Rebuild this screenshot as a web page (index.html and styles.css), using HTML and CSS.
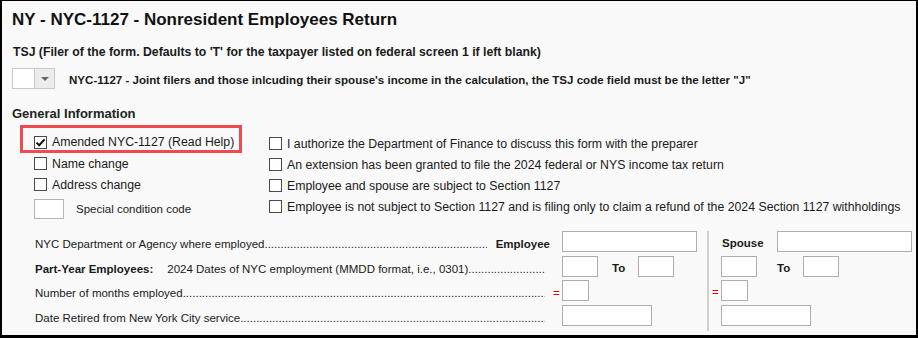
FILE: index.html
```html
<!DOCTYPE html>
<html lang="en">
<head>
<meta charset="utf-8">
<title>NY - NYC-1127 - Nonresident Employees Return</title>
<link rel="stylesheet" href="styles.css">
</head>
<body>
<div class="frame">
  <h1 class="title">NY - NYC-1127 - Nonresident Employees Return</h1>
  <div class="tsj-label">TSJ (Filer of the form. Defaults to 'T' for the taxpayer listed on federal screen 1 if left blank)</div>
  <div class="tsj-row">
    <div class="select">
      <span class="select-value"></span>
      <span class="select-btn"><svg width="8" height="4" viewBox="0 0 8 4"><path d="M0 0H8L4 4Z" fill="#666"/></svg></span>
    </div>
    <span class="note">NYC-1127 - Joint filers and those inlcuding their spouse's income in the calculation, the TSJ code field must be the letter "J"</span>
  </div>
  <div class="section-title">General Information</div>
  <div class="options">
    <div class="col col-left">
      <div class="highlight">
        <label class="check check-first"><span class="box"><svg width="11" height="11" viewBox="0 0 11 11"><path d="M1.5 5.6L4.2 8.3L9.6 2.4" fill="none" stroke="#111" stroke-width="2"/></svg></span>Amended NYC-1127 (Read Help)</label>
      </div>
      <label class="check"><span class="box"></span>Name change</label>
      <label class="check"><span class="box"></span>Address change</label>
      <div class="code-row"><span class="code-box"></span><span>Special condition code</span></div>
    </div>
    <div class="col col-right">
      <label class="check"><span class="box"></span>I authorize the Department of Finance to discuss this form with the preparer</label>
      <label class="check"><span class="box"></span>An extension has been granted to file the 2024 federal or NYS income tax return</label>
      <label class="check"><span class="box"></span>Employee and spouse are subject to Section 1127</label>
      <label class="check"><span class="box"></span>Employee is not subject to Section 1127 and is filing only to claim a refund of the 2024 Section 1127 withholdings</label>
    </div>
  </div>
  <div class="details">
    <div class="lbl">
      <span class="txt">NYC Department or Agency where employed</span><span class="leader"></span><b class="emp-head">Employee</b>
    </div>
    <div class="emp"><span class="field w135"></span></div>
    <div class="sep"></div>
    <div class="sp"><b class="sp-head">Spouse</b><span class="field w135"></span></div>

    <div class="lbl">
      <b class="txt part">Part-Year Employees:</b><span class="txt">2024 Dates of NYC employment (MMDD format, i.e., 0301)</span><span class="leader end"></span>
    </div>
    <div class="emp"><span class="field w36"></span><b class="to">To</b><span class="field w36"></span></div>
    <div class="sp"><span class="field w36"></span><b class="to to-sp">To</b><span class="field w36"></span></div>

    <div class="lbl">
      <span class="txt">Number of months employed</span><span class="leader eq-lead"></span><span class="eq">=</span>
    </div>
    <div class="emp"><span class="field w27"></span></div>
    <div class="sp"><span class="eq eq-sp">=</span><span class="field w27"></span></div>

    <div class="lbl">
      <span class="txt">Date Retired from New York City service</span><span class="leader end"></span>
    </div>
    <div class="emp"><span class="field w90"></span></div>
    <div class="sp"><span class="field w90"></span></div>
  </div>
</div>
</body>
</html>
```
FILE: styles.css
```css
* { box-sizing: border-box; }
html, body { margin: 0; padding: 0; background: #fff; }
body {
  font-family: "Liberation Sans", Arial, sans-serif;
  font-size: 12px;
  color: #1a1a1a;
}
.frame {
  width: 918px;
  height: 338px;
  background: #f9f9f9;
  border-style: solid;
  border-color: #000;
  border-width: 1px 2px 3px 2px;
  padding: 9px 0 0 10px;
  overflow: hidden;
}
.title {
  margin: 0;
  font-size: 17px;
  line-height: 20px;
  font-weight: bold;
  color: #111;
}
.tsj-label {
  margin-top: 14px;
  margin-left: 1px;
  font-size: 12.25px;
  font-weight: bold;
  line-height: 16px;
}
.tsj-row {
  display: flex;
  align-items: center;
  margin-top: 8px;
  height: 21px;
}
.select {
  display: flex;
  width: 43px;
  height: 21px;
  border: 1px solid #c8c8c8;
  background: #fff;
}
.select-value { width: 21px; }
.select-btn {
  flex: 1;
  display: flex;
  align-items: center;
  justify-content: center;
  background: #ececec;
  border-left: 1px solid #c8c8c8;
}
.note {
  margin-left: 14px;
  font-size: 11.55px;
  font-weight: bold;
  line-height: 16px;
  padding-top: 2px;
}
.section-title {
  margin-top: 17px;
  font-size: 13px;
  line-height: 16px;
  font-weight: bold;
  color: #222;
}
.options {
  display: flex;
  margin-top: 3px;
  padding-left: 8px;
}
.col { display: flex; flex-direction: column; }
.col-left { width: 249px; }
.col-right { padding-top: 8px; }
.highlight {
  width: 222px;
  border: 3px solid #ee4a50;
  padding: 6px 0 0 11px;
  height: 28px;
}
.check {
  display: flex;
  align-items: center;
  height: 21px;
  white-space: nowrap;
  line-height: 14px;
  font-size: 12.3px;
}
.col-left > .check { padding-left: 14px; }
.check-first { height: 16px; }
.box {
  width: 13px;
  height: 13px;
  border: 1px solid #4a4a4a;
  background: #fff;
  margin-right: 5px;
  display: flex;
  align-items: center;
  justify-content: center;
  flex: none;
}
.code-row {
  display: flex;
  align-items: center;
  margin-top: 4px;
  padding-left: 14px;
  font-size: 11.5px;
}
.code-box {
  width: 30px;
  height: 20px;
  border: 1px solid #b4b4b4;
  background: #fff;
  margin-right: 12px;
}
.details {
  display: grid;
  grid-template-columns: 527px 145px 2px 1fr;
  grid-auto-rows: 21px;
  row-gap: 3.5px;
  margin-top: 12px;
  padding-left: 23px;
  font-size: 11.5px;
}
.lbl {
  display: flex;
  align-items: flex-end;
  line-height: 16px;
  white-space: nowrap;
  overflow: hidden;
}
.txt { flex: none; }
.part { margin-right: 14px; }
.leader {
  flex: 1;
  overflow: hidden;
  min-width: 0;
}
.leader::before {
  content: "..................................................................................................................................................................................................................................................";
}
.leader.end { margin-right: 17px; }
.leader.eq-lead { margin-right: 8px; }
.emp-head { margin-left: 9px; margin-right: 12px; }
.eq {
  color: #e00000;
  width: 6px;
  margin-right: 3px;
}
.emp, .sp {
  display: flex;
  align-items: center;
}
.sp { padding-left: 12px; }
.sp-head { margin-left: 1px; margin-right: 13px; margin-top: 3px; }
.eq-sp { margin-left: -9px; margin-top: 2px; }
.sep {
  grid-column: 3;
  grid-row: 1 / 5;
  background: #cfcfcf;
  margin-bottom: -5px;
}
.field {
  height: 21px;
  border: 1px solid #adadad;
  background: #fff;
  flex: none;
}
.w135 { width: 135px; }
.w36 { width: 36px; }
.w27 { width: 27px; }
.w90 { width: 90px; }
.to { margin: 3px 13px 0 14px; }
.to-sp { margin-left: 20px; }
```
